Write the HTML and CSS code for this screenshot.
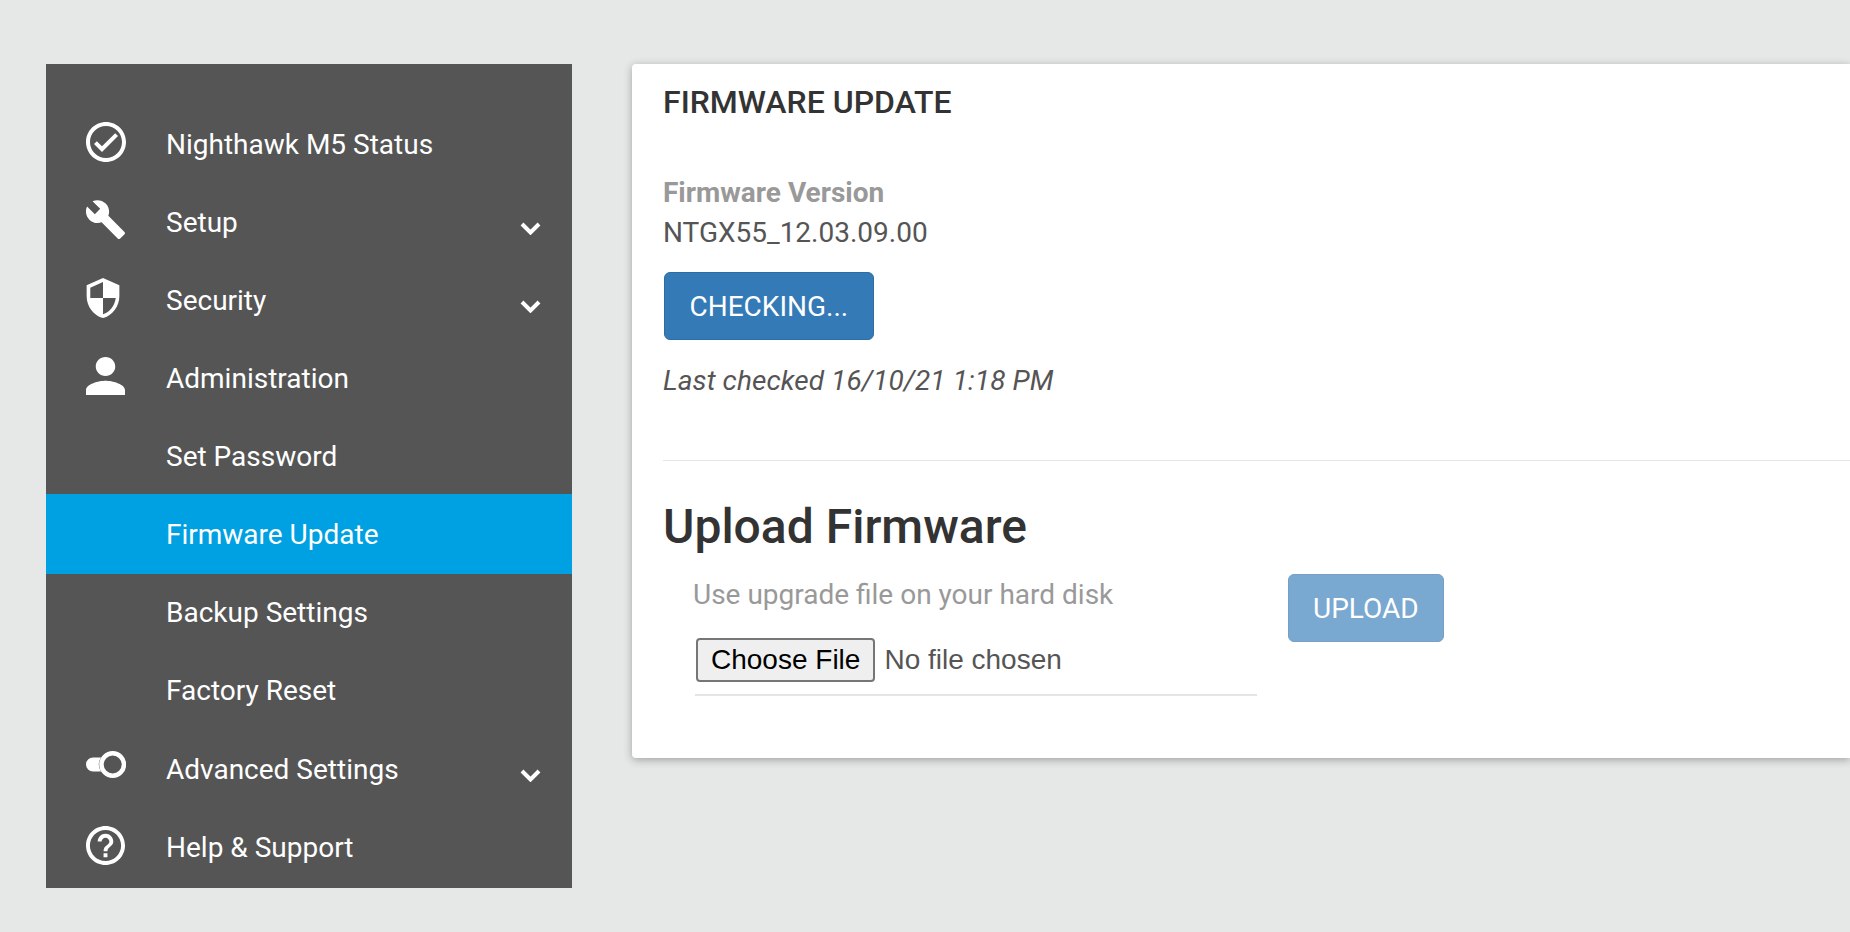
FILE: index.html
```html
<!DOCTYPE html>
<html lang="en">
<head>
    <meta charset="UTF-8">
    <meta name="viewport" content="width=device-width, initial-scale=1.0">
    <title>Firmware Update</title>
    <link rel="stylesheet" href="styles.css">
</head>
<body>

    <!--left navigation-->
    <nav class="sidebar">
        <a class="nav-item">
            <span class="nav-icon"><svg class="icon-check" viewBox="2 2 20 20"><path d="M12 2C6.48 2 2 6.48 2 12s4.48 10 10 10 10-4.48 10-10S17.52 2 12 2zm0 18c-4.41 0-8-3.59-8-8s3.59-8 8-8 8 3.59 8 8-3.59 8-8 8zm4.59-12.42L10 14.17l-2.59-2.58L6 13l4 4 8-8z"/></svg></span>
            Nighthawk M5 Status
        </a>
        <a class="nav-item">
            <span class="nav-icon"><svg class="icon-wrench" viewBox="1 1 22 22"><path d="M22.7 19l-9.1-9.1c.9-2.3.4-5-1.5-6.9-2-2-5-2.4-7.4-1.3L9 6 6 9 1.6 4.7C.4 7.1.9 10.1 2.9 12.1c1.9 1.9 4.6 2.4 6.9 1.5l9.1 9.1c.4.4 1 .4 1.4 0l2.3-2.3c.5-.4.5-1.1.1-1.4z"/></svg></span>
            Setup
            <svg class="chevron" viewBox="0 0 21 13"><path d="M2 2l8.5 8.5L19 2"/></svg>
        </a>
        <a class="nav-item">
            <span class="nav-icon"><svg class="icon-shield" viewBox="3 1 18 22"><path d="M12 1L3 5v6c0 5.55 3.84 10.74 9 12 5.16-1.26 9-6.45 9-12V5l-9-4zm0 10.99h7c-.53 4.12-3.28 7.79-7 8.94V12H5V6.3l7-3.11v8.8z"/></svg></span>
            Security
            <svg class="chevron" viewBox="0 0 21 13"><path d="M2 2l8.5 8.5L19 2"/></svg>
        </a>
        <a class="nav-item">
            <span class="nav-icon"><svg class="icon-person" viewBox="4 4 16 16" preserveAspectRatio="none"><path d="M12 12c2.21 0 4-1.79 4-4s-1.79-4-4-4-4 1.79-4 4 1.79 4 4 4zm0 2c-2.67 0-8 1.34-8 4v2h16v-2c0-2.66-5.33-4-8-4z"/></svg></span>
            Administration
        </a>
        <a class="nav-item">
            <span class="nav-icon"></span>
            Set Password
        </a>
        <a class="nav-item active">
            <span class="nav-icon"></span>
            Firmware Update
        </a>
        <a class="nav-item">
            <span class="nav-icon"></span>
            Backup Settings
        </a>
        <a class="nav-item">
            <span class="nav-icon"></span>
            Factory Reset
        </a>
        <a class="nav-item lower">
            <span class="nav-icon"><svg class="icon-toggle" viewBox="0 0 40 27"><path fill-rule="evenodd" d="M26.7 0a13.5 13.5 0 1 1 0 27a13.5 13.5 0 0 1 0-27zm0 4.5a9 9 0 1 0 0 18a9 9 0 0 0 0-18z"/><path d="M7 6.5h8a13 13 0 0 0 0 14H7a7 7 0 0 1 0-14z"/></svg></span>
            Advanced Settings
            <svg class="chevron" viewBox="0 0 21 13"><path d="M2 2l8.5 8.5L19 2"/></svg>
        </a>
        <a class="nav-item lower">
            <span class="nav-icon"><svg class="icon-help" viewBox="2 2 20 20"><path d="M11 18h2v-2h-2v2zm1-16C6.48 2 2 6.48 2 12s4.48 10 10 10 10-4.48 10-10S17.52 2 12 2zm0 18c-4.41 0-8-3.59-8-8s3.59-8 8-8 8 3.59 8 8-3.59 8-8 8zm0-14c-2.21 0-4 1.79-4 4h2c0-1.1.9-2 2-2s2 .9 2 2c0 2-3 1.75-3 5h2c0-2.25 3-2.5 3-5 0-2.21-1.79-4-4-4z"/></svg></span>
            Help &amp; Support
        </a>
    </nav>

    <!--main card, runs off the right edge of the window-->
    <main class="card">
        <h3 class="card-title">FIRMWARE UPDATE</h3>

        <div class="label">Firmware Version</div>
        <div class="version">NTGX55_12.03.09.00</div>
        <button class="button">CHECKING...</button>
        <p class="last-checked">Last checked 16/10/21 1:18 PM</p>

        <hr class="divider">

        <h2 class="upload-title">Upload Firmware</h2>
        <div class="upload-row">
            <div class="upload-field">
                <div class="upload-hint">Use upgrade file on your hard disk</div>
                <input class="file-input" type="file">
            </div>
            <button class="button disabled">UPLOAD</button>
        </div>
    </main>

</body>
</html>
```

FILE: styles.css
```css
* { box-sizing: border-box; }
html, body { height: 100%; }
body { margin: 0; padding: 64px 0 0 46px; display: flex; align-items: flex-start; gap: 60px; overflow: hidden; background: #e6e8e7; font-family: Roboto, sans-serif; color: #555; }

.sidebar { width: 526px; height: 824px; flex: none; padding-top: 41px; background: #555; }
.nav-item { display: flex; align-items: center; height: 78px; padding: 1px 31px 0 40px; color: #fff; font-size: 28px; }
.nav-item.active { height: 80px; margin: -1px 0; background: #00a1e2; }
.nav-item.lower { padding-top: 3px; }
.nav-icon { display: flex; width: 80px; flex: none; margin-bottom: 6px; }
.lower .nav-icon { margin-bottom: 8px; }
.nav-icon svg { display: block; fill: #fff; }
.icon-check { width: 40px; height: 40px; }
.icon-wrench { width: 39px; height: 39px; }
.icon-shield { width: 34px; height: 40px; }
.icon-person { width: 39px; height: 38px; }
.icon-toggle { width: 40px; height: 27px; margin-bottom: 3px; }
.icon-help { width: 39px; height: 39px; margin-top: 4px; }
.chevron { width: 21px; height: 13px; margin: 12px 0 0 auto; fill: none; stroke: #fff; stroke-width: 4; }

.card { flex: 1; height: 694px; padding: 0 0 0 31px; background: #fff; border-radius: 4px 0 0 4px; box-shadow: 0 2px 8px rgba(0,0,0,0.3); }
.card-title { margin: 0; padding-top: 20px; font-size: 32px; line-height: 36px; font-weight: 500; color: #333; }
.label { margin-top: 53px; font-size: 28px; line-height: 40px; font-weight: 700; color: #999; }
.version { font-size: 28px; line-height: 40px; }
.button { display: block; height: 68px; padding: 0 24.5px; border: 1px solid #2e6da4; border-radius: 6px; background: #337ab7; color: #fff; font-family: Roboto, sans-serif; font-size: 28px; }
.version + .button { margin: 19px 0 0 1px; }
.button.disabled { opacity: 0.65; padding: 0 24px; margin: -3px 0 0 31px; }
.last-checked { margin: 21px 0 0; font-size: 28px; line-height: 40px; font-style: italic; letter-spacing: 0.08px; }
.divider { margin: 59px 0 0; border: 0; border-top: 1px solid #e5e5e5; }
.upload-title { margin: 38px 0 0; font-size: 48px; line-height: 56px; font-weight: 500; color: #333; }
.upload-row { display: flex; align-items: flex-start; margin-top: 22px; padding-left: 32px; }
.upload-field { width: 562px; height: 119px; border-bottom: 2px solid #e5e5e5; }
.upload-hint { margin-left: -2px; font-size: 28px; line-height: 36px; color: #999; }
.file-input { display: block; width: 500px; margin: 25px 0 0 1px; font-family: "Liberation Sans", sans-serif; font-size: 28px; color: #555; }
.file-input::file-selector-button { height: 44px; margin-right: 9px; padding: 0 13px; border: 2px solid #767676; border-radius: 4px; background: #efefef; color: #000; }
```
